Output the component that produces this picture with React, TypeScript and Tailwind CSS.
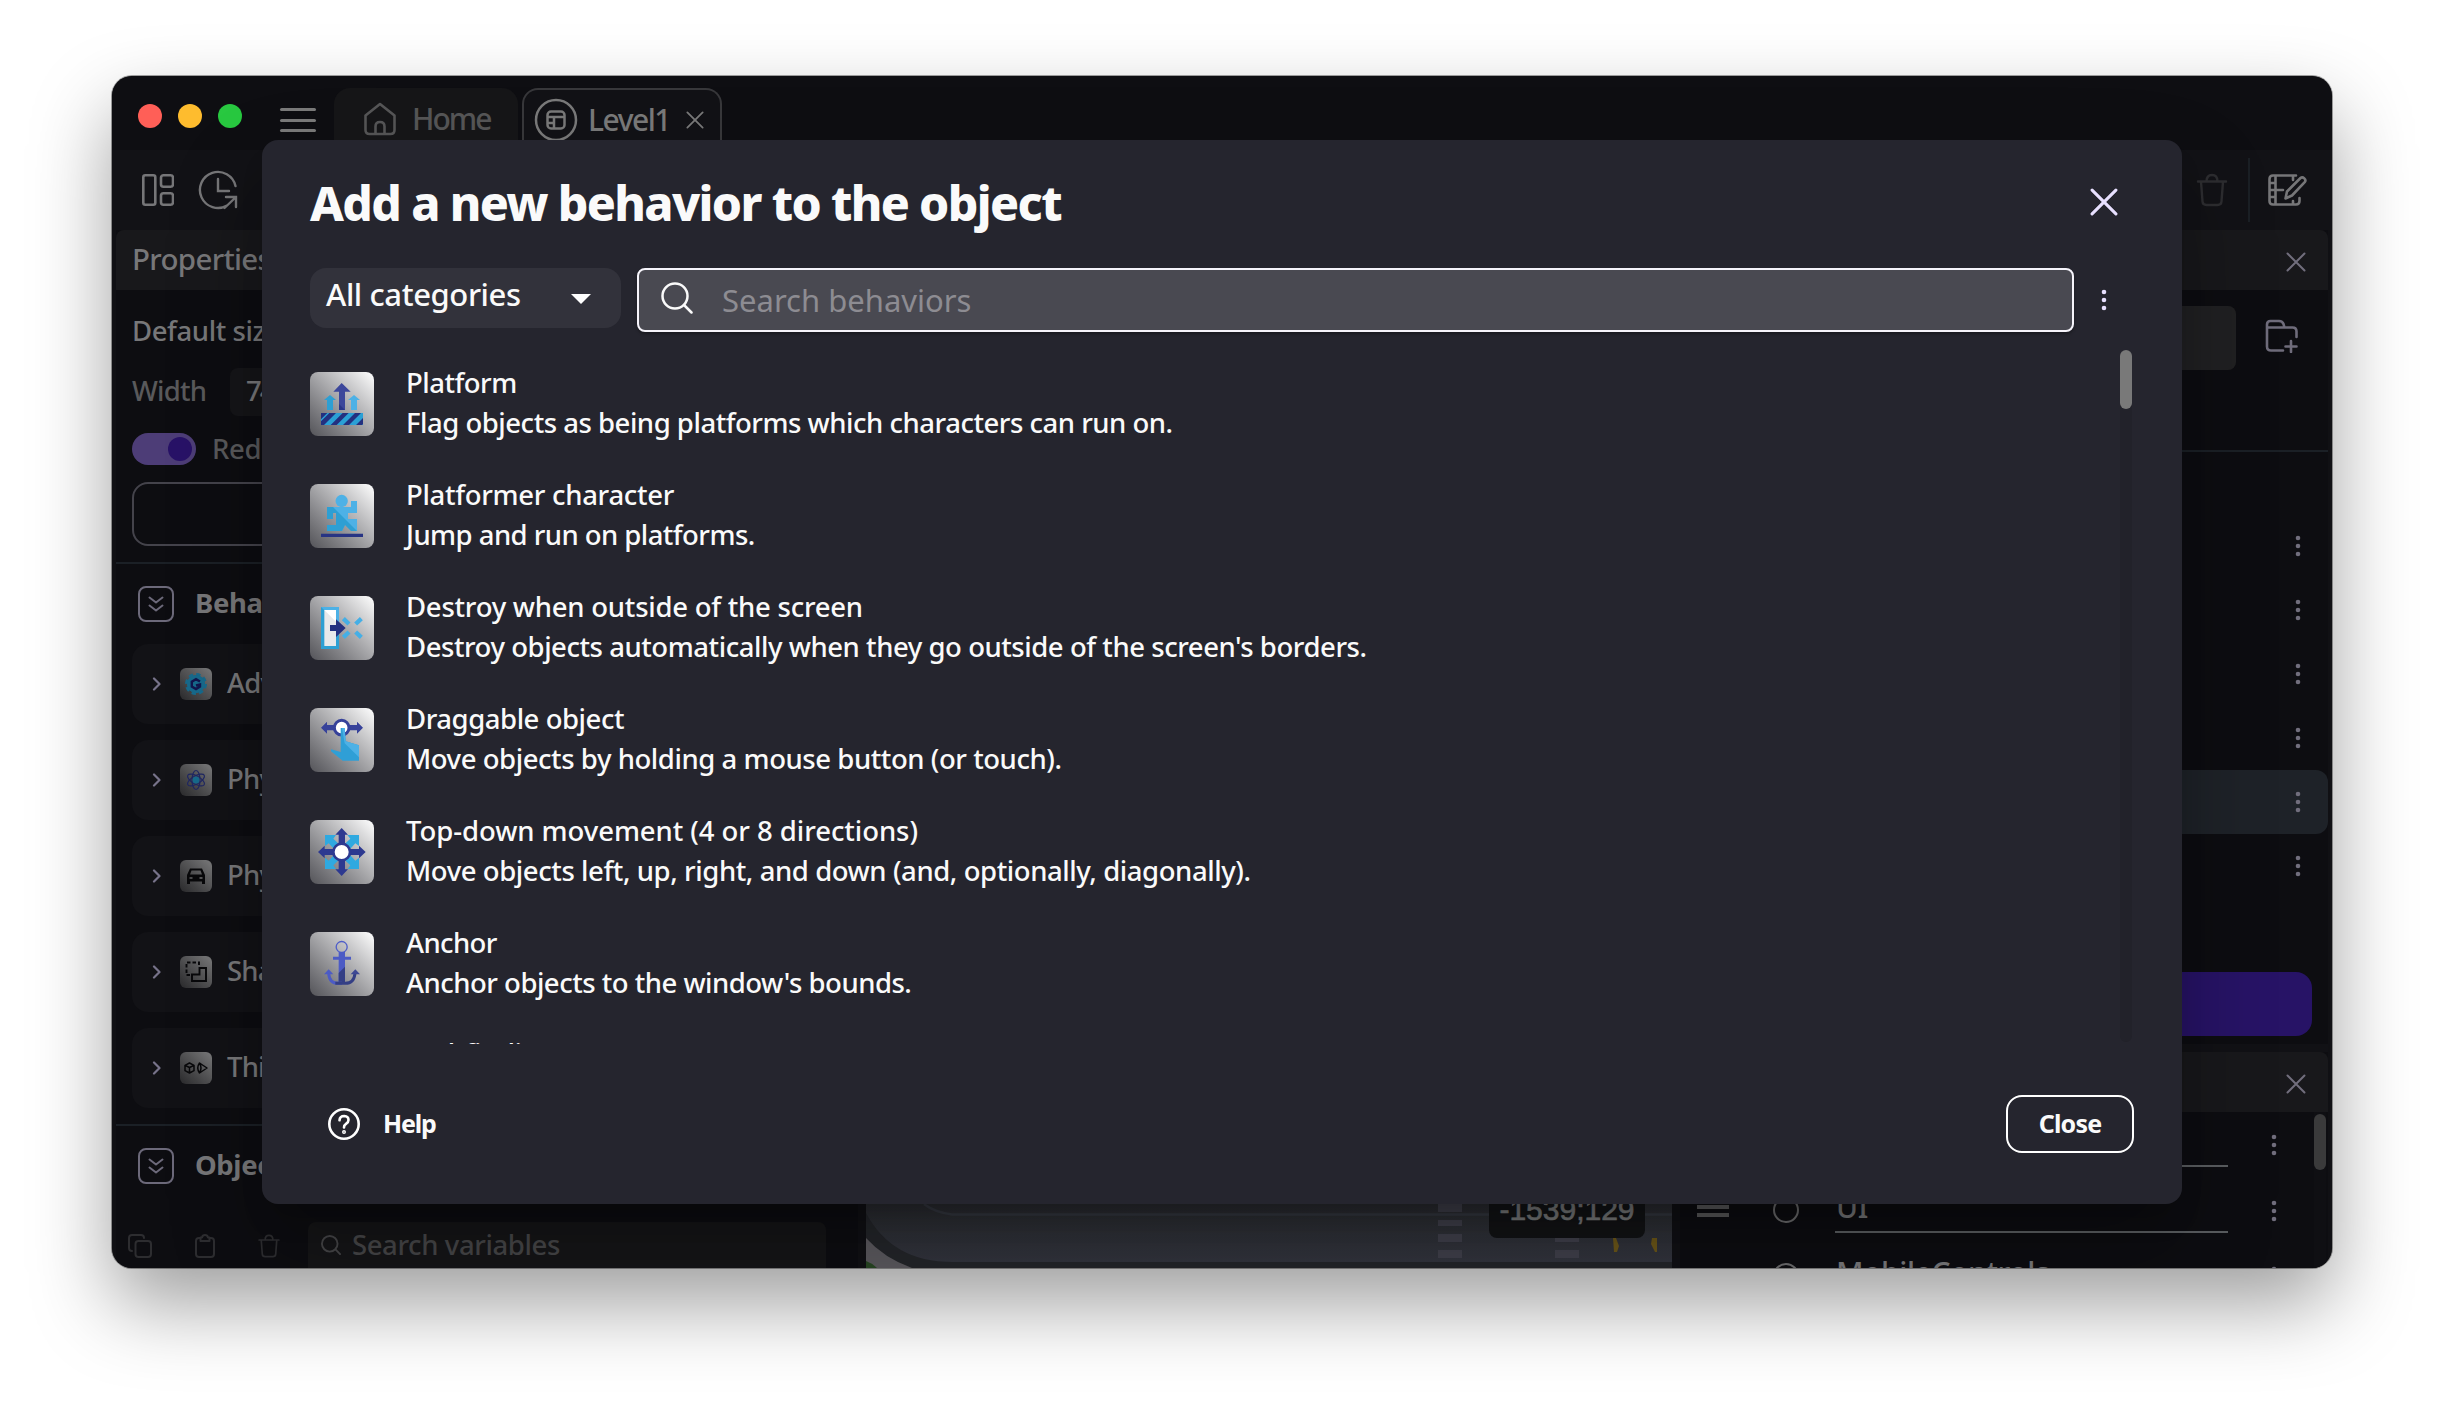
const X = ({ className = "", sw = 2 }: { className?: string; sw?: number }) => (
  <svg viewBox="0 0 20 20" fill="none" stroke="currentColor" strokeWidth={sw} strokeLinecap="round" className={className}>
    <path d="M1.5 1.5 18.5 18.5M18.5 1.5 1.5 18.5" />
  </svg>
);

const Dots = ({ className = "" }: { className?: string }) => (
  <svg viewBox="0 0 8 24" fill="currentColor" className={`h-6 w-2 shrink-0 ${className}`}>
    <circle cx="4" cy="4" r="2.3" />
    <circle cx="4" cy="12" r="2.3" />
    <circle cx="4" cy="20" r="2.3" />
  </svg>
);

const Magnifier = ({ className = "", sw = 2.5 }: { className?: string; sw?: number }) => (
  <svg viewBox="0 0 32 32" fill="none" stroke="currentColor" strokeWidth={sw} strokeLinecap="round" className={className}>
    <circle cx="14" cy="14" r="12.5" />
    <path d="m23.5 23.5 7 7" />
  </svg>
);

const Trash = ({ className = "" }: { className?: string }) => (
  <svg viewBox="0 0 32 34" fill="none" stroke="currentColor" strokeWidth="2.4" strokeLinecap="round" strokeLinejoin="round" className={className}>
    <path d="M2 8.500h28M10.500 8.500c0-3.500 1.500-6.500 5.500-6.500s5.500 3 5.500 6.500M5 8.500l1.500 20c.2 2.500 1.500 3.500 4 3.500h11c2.500 0 3.800-1 4-3.500l1.500-20" />
  </svg>
);

/* ---------- behavior icons ---------- */

const PlatformIcon = () => (
  <>
    <path d="M95 33 122 59H105V114H87V59H70Z" fill="#3c479b" />
    <path d="M87 96 105 114H87Z" fill="#2a3688" />
    <path d="M60 69 78 84H69V114H51V84H42Z" fill="#2e9fd3" />
    <path d="M132 69 150 84H141V114H123V84H114Z" fill="#4db1e6" />
    <path d="M33 123H159V159H33Z" fill="#2ba0d5" />
    <path d="M33 123H52L33 142ZM58 123H78L42 159H33V148ZM98 123H116L80 159H62ZM135 123H153L117 159H99ZM159 138V156L156 159H138Z" fill="#24307f" />
  </>
);
const RunnerIcon = () => (
  <>
    <circle cx="95" cy="51" r="18.500" fill="#4db1e6" />
    <path d="M51 69H123V51H141V87H114V105H141V141H132L123 123H105L96 141H51V123H78V87H69V105H51Z" fill="#4db1e6" />
    <path d="M51 69H69L141 141H123L105 123 96 141H51V123H78V87H69V105H51Z" fill="#2e9fd3" />
    <path d="M33 149H159V159H33Z" fill="#273484" />
  </>
);
const DestroyIcon = () => (
  <>
    <path d="M33 33H87V159H33Z" fill="#2e9fd3" />
    <path d="M33 33H87V84Z" fill="#4db1e6" />
    <path d="M43 42H78V150H43Z" fill="#e8e8ea" />
    <path d="M43 42H78V77Z" fill="#fff" />
    <path d="M100 68 117 84M154 68 137 84M100 124 117 108M154 124 137 108" stroke="#45afe6" strokeWidth="13" />
    <path d="M60 87H78V70L107 96 78 123V105H60Z" fill="#24307f" />
  </>
);
const DragIcon = () => (
  <>
    <path d="M33 59 51 41V51H141V41L159 59 141 77V67H51V77Z" fill="#37429a" />
    <circle cx="95" cy="59" r="22" fill="#fff" stroke="#37429a" strokeWidth="9" />
    <path d="M92 60H104L107 100 147 112V158H98L63 130V124L92 132Z" fill="#2f9fd6" />
    <path d="M96 60H104L107 100 147 112V148L104 106Z" fill="#4db1e6" />
  </>
);
const TopDownIcon = () => (
  <>
    <path d="M45 45H78L70 56 95 80 121 56 112 45H147V78L136 70 112 96 136 122 147 113V147H113L121 136 95 112 70 136 78 147H45V113L56 122 80 96 56 70 45 78Z" fill="#2fa9e0" />
    <path d="M95 24 114 44H105V87H147V77L167 96 147 115V105H105V148H114L95 168 76 148H86V105H44V115L24 96 44 77V87H86V44H76Z" fill="#2d3990" />
    <circle cx="95" cy="96" r="25" fill="#fff" stroke="#2d3990" strokeWidth="8" />
  </>
);
const AnchorIcon = () => (
  <>
    <circle cx="95" cy="45" r="16.500" fill="none" stroke="#4f5ec8" strokeWidth="4" />
    <path d="M86 60H105V74H123V83H105V150H86V83H69V74H86Z" fill="#4c5bc5" />
    <path d="M105 104V150H86V123Z" fill="#343f85" />
    <path d="M56 124Q58 154 84 154H96" fill="none" stroke="#4c5bc5" strokeWidth="9" />
    <path d="M76 154H106Q132 154 135 124" fill="none" stroke="#343f85" strokeWidth="9" />
    <path d="M56 112 70 127H42Z" fill="#4c5bc5" />
    <path d="M136 112 150 127H122Z" fill="#3d4894" />
  </>
);

const behaviors = [
  { icon: <PlatformIcon />, name: "Platform", text: "Flag objects as being platforms which characters can run on.", a: "tracking-[-0.5px]", b: "tracking-[-0.48px]" },
  { icon: <RunnerIcon />, name: "Platformer character", text: "Jump and run on platforms.", a: "tracking-[-0.3px]", b: "tracking-[-0.55px]" },
  { icon: <DestroyIcon />, name: "Destroy when outside of the screen", text: "Destroy objects automatically when they go outside of the screen's borders.", a: "tracking-[-0.24px]", b: "tracking-[-0.45px]" },
  { icon: <DragIcon />, name: "Draggable object", text: "Move objects by holding a mouse button (or touch).", a: "tracking-[-0.45px]", b: "tracking-[-0.44px]" },
  { icon: <TopDownIcon />, name: "Top-down movement (4 or 8 directions)", text: "Move objects left, up, right, and down (and, optionally, diagonally).", a: "tracking-[-0.06px]", b: "tracking-[-0.42px]" },
  { icon: <AnchorIcon />, name: "Anchor", text: "Anchor objects to the window's bounds.", a: "tracking-[-0.6px]", b: "tracking-[-0.5px]" },
  { icon: null, name: "Pathfinding", text: "Move objects to a target while avoiding obstacles.", a: "tracking-[-0.4px]", b: "tracking-[-0.4px]" },
];

function BehaviorRow({ item }: { item: (typeof behaviors)[number] }) {
  return (
    <div className="flex h-28 shrink-0 items-center gap-8">
      <svg viewBox="0 0 192 192" className={`h-16 w-16 shrink-0 rounded-lg ${item.icon ? "bg-linear-45 from-[#545459] to-white" : ""}`}>
        {item.icon}
      </svg>
      <div className={`text-[27.500px] leading-[40px] font-medium whitespace-nowrap text-[#fafafa] ${item.icon ? "-mt-[3px]" : "-mt-[5px]"}`}>
        <div><span className={item.a}>{item.name}</span></div>
        <div><span className={item.b}>{item.text}</span></div>
      </div>
    </div>
  );
}

/* ---------- window chrome ---------- */

function TitleBar() {
  return (
    <div className="flex h-[74px] shrink-0 bg-[#0e0e12] pl-[26px] text-[30px] font-medium text-[#7a7a7a]">
      <div className="mt-[28px] flex h-6 gap-4">
        <span className="h-6 w-6 rounded-full bg-[#ff5f57]" />
        <span className="h-6 w-6 rounded-full bg-[#febc2e]" />
        <span className="h-6 w-6 rounded-full bg-[#28c840]" />
      </div>
      <div className="mt-[32px] ml-[38px] flex h-[24px] w-9 flex-col justify-between">
        <span className="h-[3px] rounded bg-current" />
        <span className="h-[3px] rounded bg-current" />
        <span className="h-[3px] rounded bg-current" />
      </div>
      <div className="mt-3 ml-[18px] flex h-[62px] w-[184px] items-center rounded-t-2xl bg-[#161618] pl-[30px] text-[#565657]">
        <svg viewBox="0 0 32 34" fill="none" stroke="currentColor" strokeWidth="2.600" strokeLinejoin="round" className="h-[34px] w-8">
          <path d="M1.500 13.500 16 2 30.500 13.500V28q0 4-4 4h-21q-4 0-4-4ZM11.500 32V24.500q0-4.500 4.500-4.500t4.500 4.500V32" />
        </svg>
        <span className="-mt-[2px] ml-[16px] tracking-[-2px]">Home</span>
      </div>
      <div className="mt-3 ml-1 flex h-[62px] w-[200px] items-center rounded-t-2xl border-2 border-b-0 border-[#38383b] bg-[#121216] pl-[10px]">
        <svg viewBox="0 0 44 44" fill="none" stroke="currentColor" strokeWidth="2.500" className="h-11 w-11 shrink-0">
          <circle cx="22" cy="22" r="20" />
          <rect x="13.500" y="13.500" width="17" height="17" rx="3.500" />
          <path d="M13.500 19h17M20 19v11.500M13.500 25H20" />
        </svg>
        <span className="-mt-[2px] ml-[10px] w-[98px] shrink-0 tracking-[-1.5px]">Level1</span>
        <X className="h-[18px] w-[18px] shrink-0" />
      </div>
    </div>
  );
}

function Toolbar() {
  return (
    <div className="flex h-20 shrink-0 items-center bg-[#121216] pr-[24px] pl-[30px] text-[#767678]">
      <svg viewBox="0 0 32 32" fill="none" stroke="currentColor" strokeWidth="2.600" className="h-8 w-8">
        <rect x="1.300" y="1.300" width="12" height="29.400" rx="2" />
        <rect x="19" y="1.300" width="12" height="11.400" rx="2.500" />
        <rect x="19" y="19.300" width="12" height="11.400" rx="2.500" />
      </svg>
      <svg viewBox="0 0 40 40" fill="none" stroke="currentColor" strokeWidth="2.400" strokeLinecap="round" className="ml-[24px] h-10 w-10">
        <path d="M37.500 16A18 18 0 1 0 29 35.500M20 9v12h11M28 27h10v10M38 27 26.500 38" />
      </svg>
      <Trash className="ml-auto h-[34px] w-8 text-[#2d2d30]" />
      <div className="ml-[20px] h-16 w-[2px] bg-[#1b2025]" />
      <svg viewBox="0 0 40 32" fill="none" stroke="currentColor" strokeWidth="2.600" strokeLinecap="round" strokeLinejoin="round" className="ml-[18px] h-8 w-10">
        <path d="M28 1.500H5q-3.500 0-3.500 3.500V27q0 3.500 3.500 3.500H28q3.500 0 3.500-3.500V24M7.500 1.500v29M1.500 9h6M1.500 16H15M1.500 23h6M25 1.500V6M25 30.500V27" />
        <path d="m17.500 24.500 1.500-7L32.500 4q1.800-1.500 3.800.4t.4 3.800L24 21.500Z" />
      </svg>
    </div>
  );
}

const SectionHead = ({ label }: { label: string }) => (
  <div className="flex h-9 items-center pl-[22px] text-[27.500px] font-bold whitespace-nowrap text-[#777779]">
    <svg viewBox="0 0 36 36" fill="none" stroke="#6c697a" strokeWidth="2" strokeLinecap="round" strokeLinejoin="round" className="h-9 w-9 shrink-0">
      <rect x="1" y="1" width="34" height="34" rx="7" />
      <path d="m11.500 11.500 6.500 5 6.500-5M11.500 19.500l6.500 5 6.500-5" />
    </svg>
    <span className="-mt-[2px] ml-[21px] tracking-[-0.4px]">{label}</span>
  </div>
);

const gear = (
  <>
    <circle cx="16" cy="16" r="9" fill="#176a8c" stroke="#176a8c" strokeWidth="4" strokeDasharray="4 3.060" />
    <circle cx="16" cy="16" r="9" fill="#176a8c" />
    <path d="M20 13.500 16 11.200 11.800 13.600v5L16 21l4-2.400V16.500l-4 1" fill="none" stroke="#12164e" strokeWidth="2.400" />
  </>
);
const atom = (
  <>
    <g fill="none" stroke="#1f2763" strokeWidth="1.200">
      <ellipse cx="16" cy="16" rx="4" ry="9.500" />
      <ellipse cx="16" cy="16" rx="4" ry="9.500" transform="rotate(60 16 16)" />
      <ellipse cx="16" cy="16" rx="4" ry="9.500" transform="rotate(-60 16 16)" />
    </g>
    <circle cx="16" cy="16" r="3.500" fill="#176a8c" />
  </>
);
const car = <path fillRule="evenodd" d="M10 8.500h12l3 6.500v9h-3v-2.500H10V24H7v-9ZM11.500 10.500 10 14.500h12l-1.500-4ZM9.500 17v2h3v-2ZM19.500 17v2h3v-2Z" fill="#08080a" />;
const shape = (
  <g fill="none" stroke="#08080a" strokeWidth="1.900">
    <path d="M10 19H6.500V6.500H19V10" strokeDasharray="3.500 2" />
    <path d="M19.500 12H26v13H12V18.500h7.500Z" />
  </g>
);
const cubeCam = (
  <g fill="none" stroke="#08080a" strokeWidth="1.500" strokeLinejoin="round">
    <path d="m9.500 11 4.500 2.300v5.400L9.500 21 5 18.700v-5.400ZM5 13.300l4.500 2.200 4.500-2.200M9.500 15.500V21" />
    <path d="M19.500 11 27 16l-7.500 5q-3.500-5 0-10Zm0 0q3 5 0 10" />
  </g>
);

const attached = [
  { icon: gear, label: "Advanced" },
  { icon: atom, label: "Physics" },
  { icon: car, label: "Physics car" },
  { icon: shape, label: "Shadow" },
  { icon: cubeCam, label: "Third person" },
];

function PropertiesPanel() {
  return (
    <div className="flex w-[754px] shrink-0 border-x-[4px] border-r-8 border-[#101014] text-[27.500px] font-medium text-[#777779]">
      <div className="flex flex-1 flex-col bg-[#0d0d11]">
        <div className="flex h-[60px] shrink-0 items-center rounded-t-lg bg-[#18181b] pl-[16px] text-[29.500px] leading-none">
          <span className="-mt-[2px] tracking-[-0.7px]">Properties</span>
        </div>
        <div className="mt-[21px] h-[40px] pl-[16px] leading-[40px] tracking-[-0.4px] whitespace-nowrap">Default size</div>
        <div className="mt-[17px] flex h-12 items-center pl-[16px] text-[#59595b]">
          <span className="-mt-[2px] w-[98px] tracking-[-0.8px]">Width</span>
          <div className="flex h-12 w-[240px] items-center rounded-lg bg-[#151518] pb-[2px] pl-4 tracking-[-2px] text-[#777779]">744</div>
        </div>
        <div className="mt-[17px] flex h-8 items-center pl-4 text-[#59595b]">
          <span className="flex h-8 w-16 items-center justify-end rounded-full bg-[#4d3d77] pr-1">
            <span className="h-6 w-6 rounded-full bg-[#281267]" />
          </span>
          <span className="-mt-[1px] ml-[16px] tracking-[-0.3px] whitespace-nowrap">Redraw</span>
        </div>
        <div className="mt-[17px] mr-4 ml-4 h-16 shrink-0 rounded-2xl border-2 border-[#44434b]" />
        <div className="mt-4 mb-[22px] h-[2px] shrink-0 bg-[#1b2026]" />
        <SectionHead label="Behaviors" />
        <div className="mt-[22px] flex flex-col gap-4 px-4">
          {attached.map((a) => (
            <div key={a.label} className="flex h-20 items-center rounded-2xl bg-[#121216] pl-[20px]">
              <svg viewBox="0 0 10 14" fill="none" stroke="#77738a" strokeWidth="2.200" strokeLinecap="round" strokeLinejoin="round" className="h-[14px] w-[10px]">
                <path d="M2 1.500 7.500 7 2 12.500" />
              </svg>
              <svg viewBox="0 0 32 32" className="ml-[18px] h-8 w-8 rounded-md bg-linear-45 from-[#2a2a2c] to-[#7d7d7e]">{a.icon}</svg>
              <span className="-mt-[2px] ml-[15px] tracking-[-0.8px] whitespace-nowrap">{a.label}</span>
            </div>
          ))}
        </div>
        <div className="mt-4 mb-[22px] h-[2px] shrink-0 bg-[#1b2026]" />
        <SectionHead label="Object Variables" />
        <div className="mt-[38px] flex h-12 shrink-0 text-[#2d2d30]">
          <svg viewBox="0 0 24 24" fill="none" stroke="currentColor" strokeWidth="2" strokeLinecap="round" className="mt-3 ml-[12px] h-6 w-6">
            <rect x="7.500" y="7" width="15.500" height="16" rx="3" />
            <path d="M4 17q-3 0-3-3V4q0-3 3-3H13q3 0 3 3" />
          </svg>
          <svg viewBox="0 0 20 24" fill="none" stroke="currentColor" strokeWidth="2" strokeLinejoin="round" className="mt-3 ml-[43px] h-6 w-5">
            <path d="M5.500 4H4Q1 4 1 7V20q0 3 3 3H16q3 0 3-3V7q0-3-3-3H14.500M5.500 3.500H7Q7.500 1 10 1t3 2.500h1.500V7h-9Z" />
          </svg>
          <Trash className="mt-3 ml-[42px] h-6 w-6" />
          <div className="ml-[27px] flex h-16 w-[518px] rounded-lg bg-[#151517] pl-[13px] text-[#454547]">
            <Magnifier sw={3} className="mt-[13px] h-5 w-5" />
            <span className="mt-[3px] ml-[11px] leading-[40px] tracking-[-0.4px]">Search variables</span>
          </div>
        </div>
      </div>
    </div>
  );
}

function SceneCanvas() {
  return (
    <div className="relative flex flex-1 items-end overflow-hidden bg-[#2c2e37]">
      <svg viewBox="0 0 806 64" className="h-16 w-full shrink-0">
        <defs>
          <linearGradient id="road" x1="0" y1="0" x2="0" y2="1">
            <stop offset="0" stopColor="#2a2c30" />
            <stop offset="1" stopColor="#32343e" />
          </linearGradient>
        </defs>
        <rect width="806" height="64" fill="url(#road)" />
        <path d="M58 0Q68 8 86 10.500H806" fill="none" stroke="#353841" strokeWidth="2.500" />
        <path d="M0 9Q26 58 86 58H806V64H0Z" fill="#232529" />
        <path d="M0 34Q18 54 46 64H0Z" fill="#5a585d" />
        <path d="M0 57Q6 59 11 64H0Z" fill="#274623" />
        <path d="M572 0h24v8h-24ZM572 16h24v6h-24ZM572 30h24v8h-24ZM572 46h24v8h-24ZM689 30h24v8h-24ZM689 46h24v8h-24Z" fill="#3f3f4a" />
        <path d="M747 34h3l3 8-2 6h-3ZM786 34h5v14h-2l-4-8Z" fill="#6a5518" />
      </svg>
      <div className="absolute right-[27px] bottom-[30px] flex h-[52px] w-[156px] justify-center rounded-lg bg-[#121315] pt-[6px] font-['Liberation_Sans'] text-[30px] leading-[36px] text-[#77797a] [-webkit-text-stroke:0.7px_#77797a]">
        -1539;129
      </div>
    </div>
  );
}

const layers = ["", "UI", "MobileControls"];

function RightPanel() {
  return (
    <div className="flex w-[660px] shrink-0 border-r-4 border-l-8 border-[#101014] text-[#716e7d]">
      <div className="flex flex-1 flex-col bg-[#0d0d11]">
        <div className="flex h-[60px] shrink-0 items-center justify-end rounded-t-lg bg-[#18181b] pt-1 pr-[22px]">
          <X className="h-5 w-5" />
        </div>
        <div className="mt-4 flex h-16 items-center pl-4">
          <div className="h-16 w-[540px] rounded-lg bg-[#202022]" />
          <svg viewBox="0 0 34 34" fill="none" stroke="#6f6c7b" strokeWidth="2.600" strokeLinecap="round" strokeLinejoin="round" className="-mt-[4px] ml-[29px] h-[34px] w-[34px]">
            <path d="M18 31.500H6q-4 0-4-4V5.500Q2 2 5.500 2H14q3.500 0 4.500 3l1 3.500H27.500q4 0 4 4V18M2 8.500H20M26 22v11M20.500 27.500h11" />
          </svg>
        </div>
        <div className="mt-20 mb-[62px] h-[2px] shrink-0 bg-[#1b2026]" />
        {[0, 1, 2, 3, 4, 5].map((i) => (
          <div key={i} className={`flex h-16 items-center justify-end rounded-xl pr-[26px] ${i === 4 ? "bg-[#1e2228]" : ""}`}>
            <Dots />
          </div>
        ))}
        <div className="mt-[74px] mr-4 ml-4 h-16 shrink-0 rounded-2xl bg-[#271366]" />
        <div className="mt-2 h-2 shrink-0 bg-[#111115]" />
        <div className="flex h-[60px] shrink-0 items-center justify-end rounded-t-lg bg-[#18181b] pt-1 pr-[22px]">
          <X className="h-5 w-5" />
        </div>
        <div className="flex flex-1 overflow-hidden">
          <div className="flex flex-1 flex-col">
            {layers.map((name) => (
              <div key={name} className="flex h-[66px] shrink-0 pl-[17px] text-[30px] font-medium text-[#78787a]">
                <div className="mt-[19px] flex h-5 w-8 flex-col justify-between">
                  {name !== "MobileControls" && (
                    <>
                      <span className="h-1 bg-[#5a5a5c]" />
                      <span className="h-1 bg-[#5a5a5c]" />
                      <span className="h-1 bg-[#5a5a5c]" />
                    </>
                  )}
                </div>
                <span className="mt-[19px] ml-[44px] h-[26px] w-[26px] rounded-full border-2 border-[#6c6c6e]" />
                <div className="ml-[36px] h-[55px] w-[393px] border-b-2 border-[#5a5d60] pt-[9px] pl-[1px] leading-[40px] tracking-[-0.4px]">{name}</div>
                <Dots className="mt-[21px] ml-[42px] text-[#716e7d]" />
              </div>
            ))}
          </div>
          <div className="mr-[2px] w-3 bg-[#0f0f13] pt-[2px]">
            <div className="h-14 rounded-full bg-[#3a3a3b]" />
          </div>
        </div>
      </div>
    </div>
  );
}

function BehaviorDialog() {
  return (
    <div className="absolute top-[64px] left-[150px] flex h-[1064px] w-[1920px] flex-col rounded-2xl bg-[#25252e] pl-12 text-[#fafafa] shadow-[0_20px_30px_-12px_rgba(0,0,0,0.28),0_44px_90px_6px_rgba(0,0,0,0.22)]">
      <div className="flex h-[128px] shrink-0 pr-[64px]">
        <h1 className="mt-[33px] text-[48px] leading-[60px] font-extrabold tracking-[-1.62px] whitespace-nowrap">Add a new behavior to the object</h1>
        <X sw={2.2} className="mt-[48px] ml-auto h-7 w-7 text-[#e8e0ff]" />
      </div>
      <div className="flex h-16 shrink-0">
        <div className="flex h-[60px] w-[311px] rounded-2xl bg-[#32323b] pl-4 text-[31px] font-medium">
          <span className="mt-[6px] leading-[40px] tracking-[-0.4px] whitespace-nowrap">All categories</span>
          <svg viewBox="0 0 20 10" className="mt-[26px] mr-[30px] ml-auto h-[10px] w-5"><path d="M0 0h20L10 10Z" fill="#fff" /></svg>
        </div>
        <div className="ml-4 flex h-16 w-[1437px] rounded-lg border-2 border-[#f6f4fb] bg-[#494951] pl-[22px] text-[31px] text-[#8d8c92] shadow-[0_2px_3px_rgba(0,0,0,0.3)]">
          <Magnifier className="mt-[12px] h-8 w-8 text-[#fafafa]" />
          <span className="mt-[10px] ml-[29px] leading-[40px]">Search behaviors</span>
        </div>
        <Dots className="mt-5 ml-[26px] text-[#e8e0ff]" />
      </div>
      <div className="mt-4 flex h-[696px] shrink-0 overflow-hidden">
        <div className="flex w-[1810px] flex-col">
          {behaviors.map((b) => (
            <BehaviorRow key={b.name} item={b} />
          ))}
        </div>
        <div className="mt-[2px] h-[692px] w-3 rounded-full bg-[#22222a]">
          <div className="h-[59px] rounded-full bg-[#797979]" />
        </div>
      </div>
      <div className="mt-[51px] flex h-[58px] items-center pr-12 text-[25px] font-bold">
        <svg viewBox="0 0 32 32" fill="none" stroke="#fff" strokeWidth="2.600" strokeLinecap="round" className="ml-[18px] h-8 w-8">
          <circle cx="16" cy="16" r="14.700" />
          <path d="M11.500 12.300q.3-4.300 4.700-4.300 4.300.2 4.300 4 0 2.300-2.500 3.900-2 1.300-2 3.600" />
          <circle cx="16" cy="24" r=".7" />
        </svg>
        <span className="-mt-[1px] ml-[23px] tracking-[-1.2px]">Help</span>
        <button className="ml-auto flex h-[58px] w-32 items-center justify-center rounded-2xl border-2 border-white pb-[1px] tracking-[-0.8px]">Close</button>
      </div>
    </div>
  );
}

export default function App() {
  return (
    <div className="h-[1416px] w-[2444px] overflow-hidden bg-white pt-[76px] pl-[112px] font-['Noto_Sans',sans-serif]">
      <div className="h-[1192px] w-[2220px] rounded-[20px] shadow-[0_0_0_1px_rgba(0,0,0,0.35),0_36px_80px_rgba(0,0,0,0.38)]">
        <div className="relative flex h-full flex-col overflow-hidden rounded-[20px] bg-[#0d0d11]">
          <TitleBar />
          <Toolbar />
          <div className="flex h-[1038px] shrink-0">
            <PropertiesPanel />
            <SceneCanvas />
            <RightPanel />
          </div>
          <BehaviorDialog />
        </div>
      </div>
    </div>
  );
}
